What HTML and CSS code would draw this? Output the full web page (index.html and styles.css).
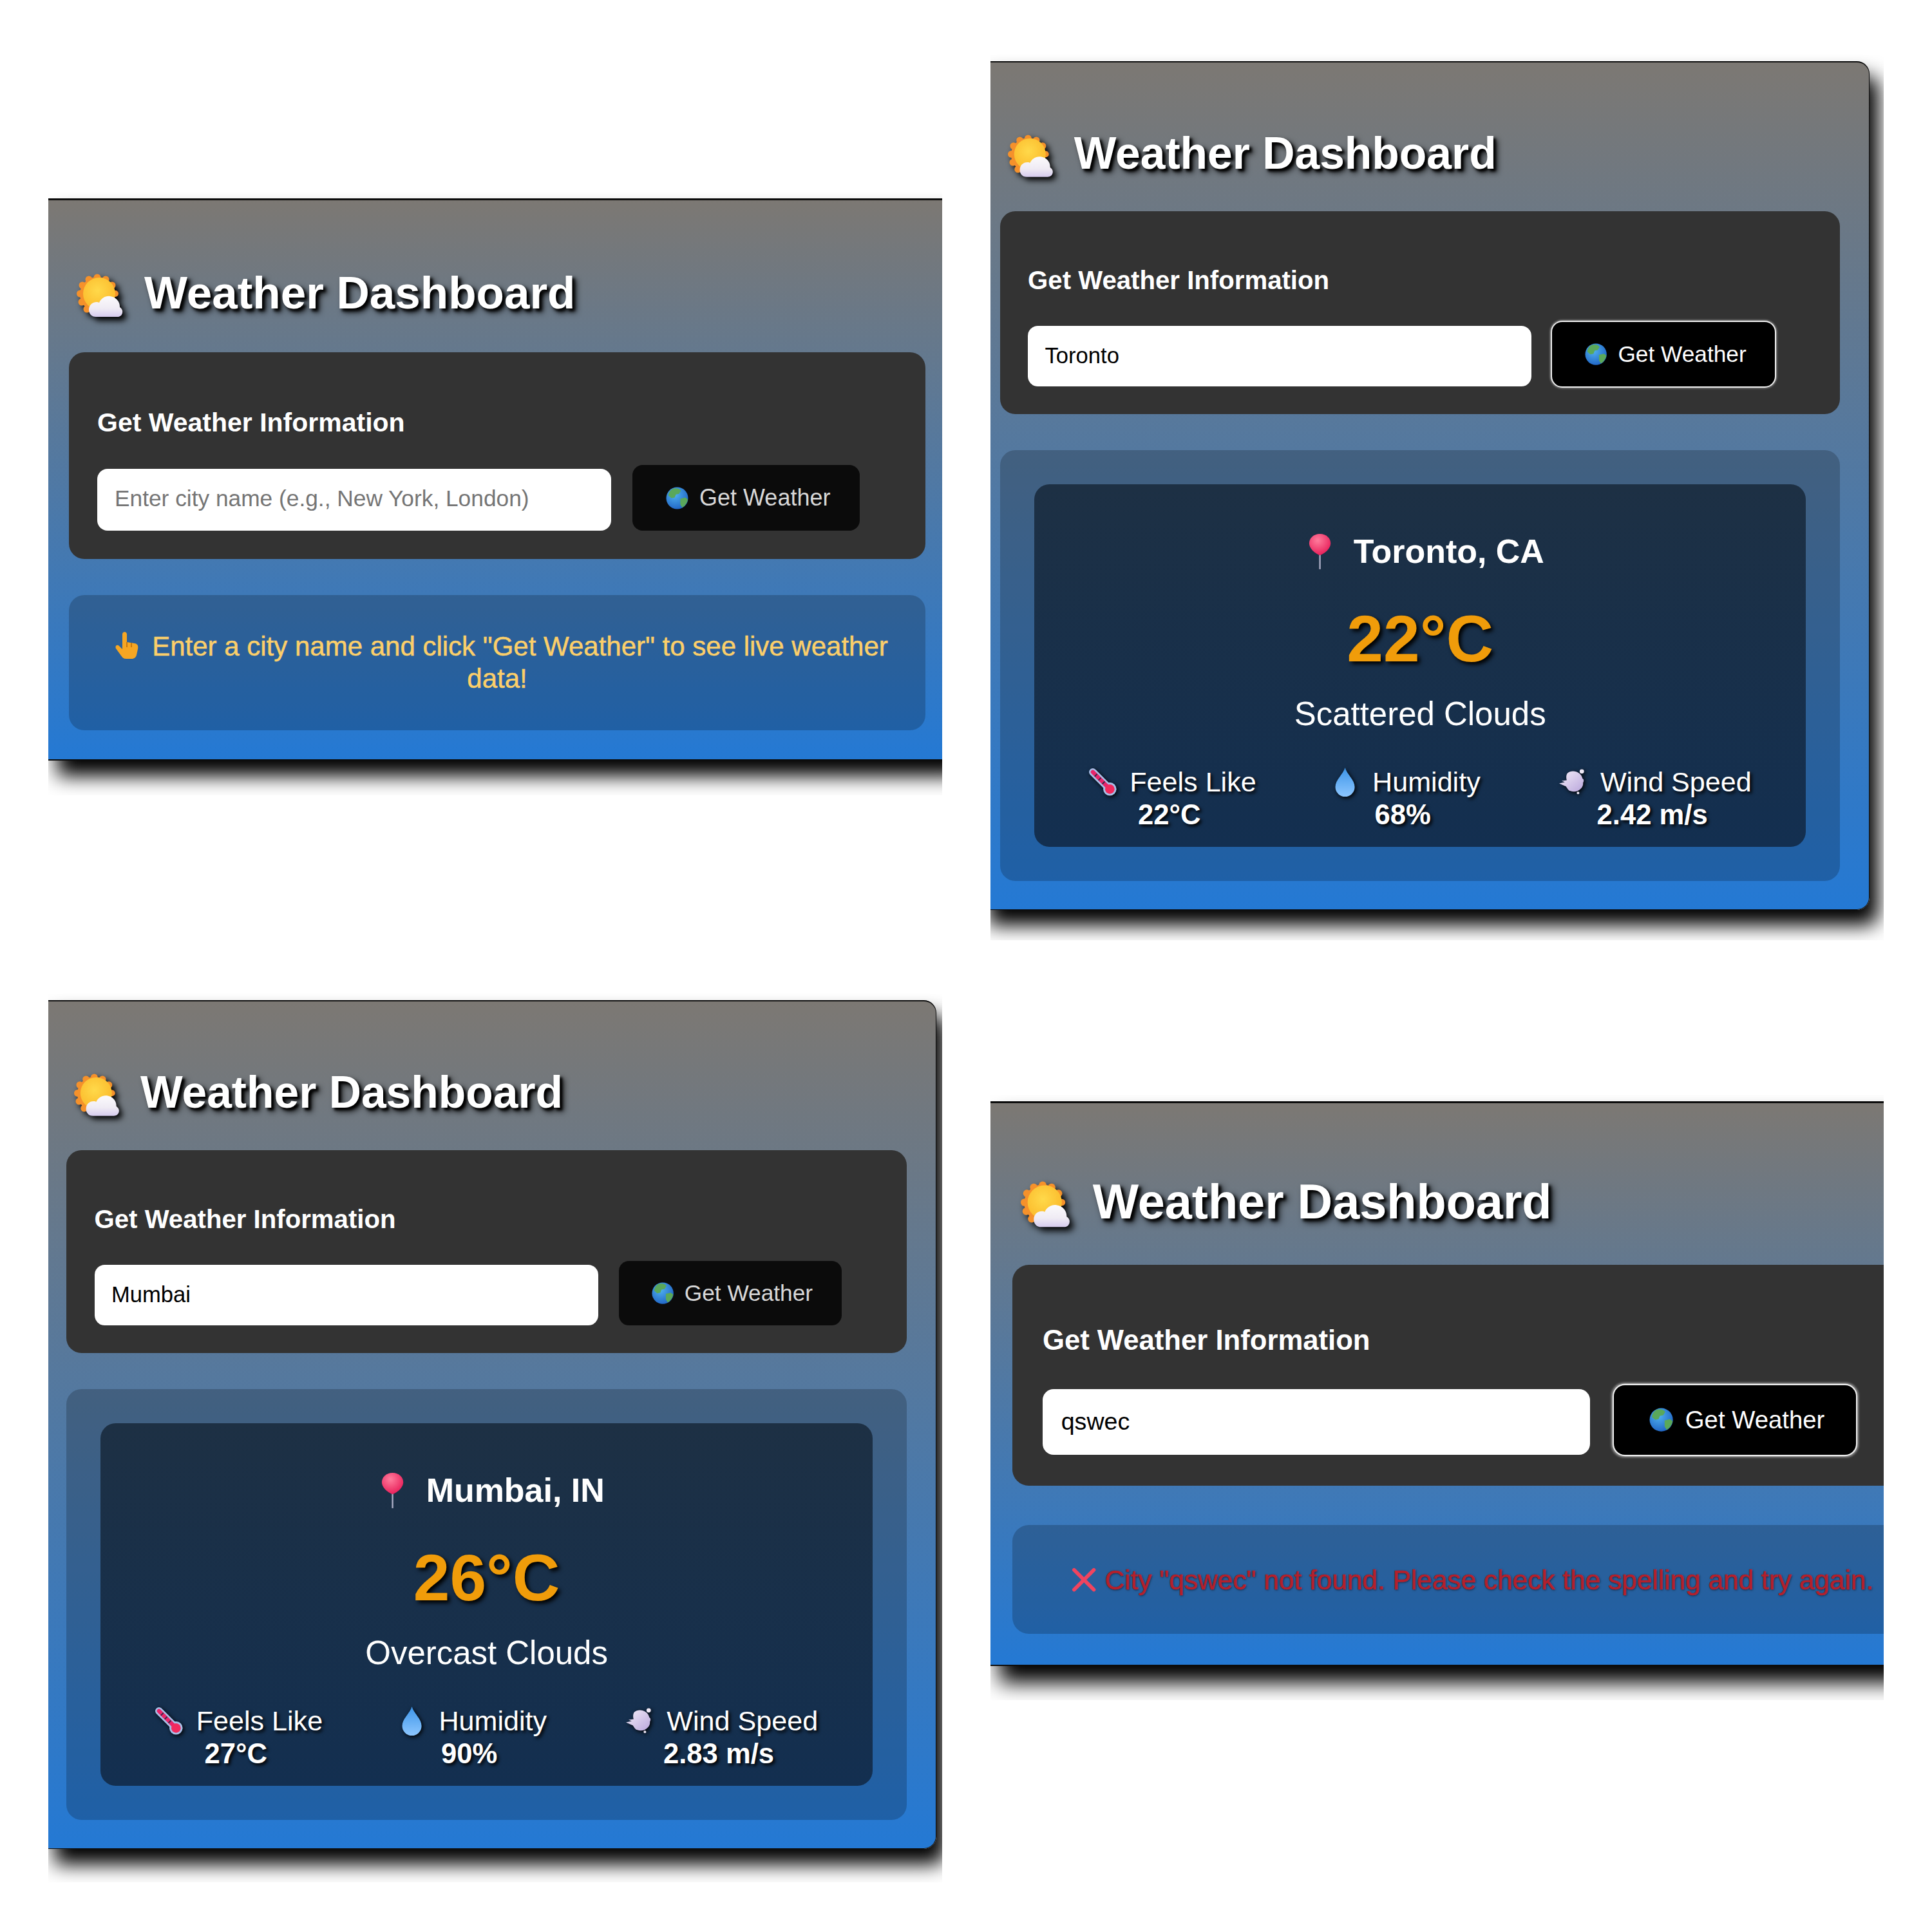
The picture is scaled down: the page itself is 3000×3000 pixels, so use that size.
FILE: index.html
```
<!DOCTYPE html>
<html lang="en">
<head>
<meta charset="utf-8">
<title>Weather Dashboard</title>
<link rel="stylesheet" href="styles.css">
</head>
<body>
<svg class="defs" width="0" height="0" aria-hidden="true">
  <defs>
    <radialGradient id="gSun" cx="45%" cy="40%" r="60%"><stop offset="0" stop-color="#ffd94a"/><stop offset="1" stop-color="#fbbb2c"/></radialGradient>
    <linearGradient id="gCloud" x1="0" y1="0" x2="0" y2="1"><stop offset="0" stop-color="#fbfafc"/><stop offset="0.6" stop-color="#efebf4"/><stop offset="1" stop-color="#d6cbee"/></linearGradient>
    <radialGradient id="gGlobe" cx="40%" cy="35%" r="70%"><stop offset="0" stop-color="#4fb0ee"/><stop offset="1" stop-color="#1f63c4"/></radialGradient>
    <radialGradient id="gPin" cx="40%" cy="30%" r="70%"><stop offset="0" stop-color="#ff7c9c"/><stop offset="1" stop-color="#e81f5a"/></radialGradient>
    <linearGradient id="gDrop" x1="0" y1="0" x2="0" y2="1"><stop offset="0" stop-color="#3d95e8"/><stop offset="1" stop-color="#8cc6ff"/></linearGradient>
    <linearGradient id="gWind" x1="0" y1="0" x2="1" y2="1"><stop offset="0" stop-color="#f4eef8"/><stop offset="1" stop-color="#b9a6dc"/></linearGradient>
    <symbol id="i-sun" viewBox="0 0 74 74">
      <g fill="#f5912b">
        <circle cx="32" cy="32" r="27"/><circle cx="32" cy="6" r="5.5"/><circle cx="45" cy="9" r="5.5"/><circle cx="55" cy="18" r="5.5"/><circle cx="60" cy="31" r="5"/><circle cx="19" cy="9" r="5.5"/><circle cx="9" cy="18" r="5.5"/><circle cx="5.500" cy="31" r="5.5"/><circle cx="8" cy="44" r="5.5"/><circle cx="16" cy="55" r="5.500"/><circle cx="26" cy="60" r="5"/>
      </g>
      <circle cx="35" cy="31" r="25" fill="url(#gSun)"/>
      <path d="M30 67c-7 0-11-5-11-11 0-7 5-12 12-12 1 0 3 0 4 1 3-7 10-11 17-10 9 1 15 8 15 16v1c3 2 5 5 4 9-1 4-4 6-8 6z" fill="url(#gCloud)"/>
    </symbol>
    <symbol id="i-globe" viewBox="0 0 36 36">
      <circle cx="18" cy="18" r="17.5" fill="url(#gGlobe)"/>
      <path d="M11 3c6-2 11 0 13 3l-3 5-5 1-2 5-5 1-5-4c0-4 3-9 7-11zM23 19l8-2 4 3c-1 6-5 11-9 13l-3-5z" fill="#5aa85a"/>
    </symbol>
    <symbol id="i-hand" viewBox="0 0 40 44">
      <path d="M13 5c0-5 7-5 7 0v12l12 2c5 1 6 4 5 9l-2 9c-1 4-4 6-8 6H19c-4 0-6-2-8-5L3 27c-2-4 2-7 5-4l5 5z" fill="#f6a623"/>
      <path d="M20 17v8M27 18v7" stroke="#c9780c" stroke-width="2" fill="none"/>
    </symbol>
    <symbol id="i-pin" viewBox="0 0 44 56">
      <path d="M22 28v28" stroke="#a9acc4" stroke-width="2.5"/>
      <path d="M22 0c10 0 17 7 17 15s-9 16-17 19C14 31 5 23 5 15S12 0 22 0z" fill="url(#gPin)"/>
    </symbol>
    <symbol id="i-thermo" viewBox="0 0 44 44">
      <path d="M6 6 30 30" stroke="#a8bfe8" stroke-width="12" stroke-linecap="round"/>
      <circle cx="33" cy="33" r="10.500" fill="#a8bfe8"/>
      <path d="M6 6 30 30" stroke="#e8246a" stroke-width="6.500" stroke-linecap="round"/>
      <circle cx="33" cy="33" r="7.500" fill="#f22a5e"/>
      <path d="M9 13l4-4M15 19l4-4M21 25l4-4" stroke="#3a2a4a" stroke-width="2"/>
    </symbol>
    <symbol id="i-drop" viewBox="0 0 36 50">
      <path d="M18 1c3 11 16 20 16 32a16 16 0 0 1-32 0C2 21 15 12 18 1z" fill="url(#gDrop)"/>
    </symbol>
    <symbol id="i-wind" viewBox="0 0 44 44">
      <path d="M13 8c8-7 22-2 24 8 3 2 2 5 1 7 1 9-10 17-20 13-3 0-5-4-7-7l-11-5 9-2-5-2 8-1c-1-4-1-8 1-11z" fill="url(#gWind)"/>
      <circle cx="36" cy="5" r="3.500" fill="#efe8f5"/><circle cx="30" cy="39" r="2" fill="#efe8f5"/>
    </symbol>
    <symbol id="i-x" viewBox="0 0 40 40">
      <path d="M4 4 36 36M36 4 4 36" stroke="#f0445f" stroke-width="6" stroke-linecap="round"/>
    </symbol>
  </defs>
</svg>

<main class="sheet">
  <section class="shot shot-a">
    <div class="panel">
      <h1 class="title"><svg class="ic ic-title"><use href="#i-sun"/></svg>Weather Dashboard</h1>
      <div class="search">
        <h3 class="search-head">Get Weather Information</h3>
        <div class="search-row">
          <div class="field placeholder">Enter city name (e.g., New York, London)</div>
          <div class="go"><svg class="ic ic-globe"><use href="#i-globe"/></svg>Get Weather</div>
        </div>
      </div>
      <div class="note note-hint"><svg class="ic ic-hand"><use href="#i-hand"/></svg>Enter a city name and click "Get Weather" to see live weather data!</div>
    </div>
  </section>

  <section class="shot shot-b">
    <div class="panel">
      <h1 class="title"><svg class="ic ic-title"><use href="#i-sun"/></svg>Weather Dashboard</h1>
      <div class="search">
        <h3 class="search-head">Get Weather Information</h3>
        <div class="search-row">
          <div class="field">Toronto</div>
          <div class="go go-focus"><svg class="ic ic-globe"><use href="#i-globe"/></svg>Get Weather</div>
        </div>
      </div>
      <div class="result">
        <div class="report">
          <div class="city"><svg class="ic ic-pin"><use href="#i-pin"/></svg>Toronto, CA</div>
          <div class="temp">22°C</div>
          <div class="desc">Scattered Clouds</div>
          <div class="stats">
            <div class="stat"><div class="stat-label"><svg class="ic ic-stat"><use href="#i-thermo"/></svg>Feels Like</div><div class="stat-value">22°C</div></div>
            <div class="stat"><div class="stat-label"><svg class="ic ic-stat"><use href="#i-drop"/></svg>Humidity</div><div class="stat-value">68%</div></div>
            <div class="stat"><div class="stat-label"><svg class="ic ic-stat"><use href="#i-wind"/></svg>Wind Speed</div><div class="stat-value">2.42 m/s</div></div>
          </div>
        </div>
      </div>
    </div>
  </section>

  <section class="shot shot-c">
    <div class="panel">
      <h1 class="title"><svg class="ic ic-title"><use href="#i-sun"/></svg>Weather Dashboard</h1>
      <div class="search">
        <h3 class="search-head">Get Weather Information</h3>
        <div class="search-row">
          <div class="field">Mumbai</div>
          <div class="go"><svg class="ic ic-globe"><use href="#i-globe"/></svg>Get Weather</div>
        </div>
      </div>
      <div class="result">
        <div class="report">
          <div class="city"><svg class="ic ic-pin"><use href="#i-pin"/></svg>Mumbai, IN</div>
          <div class="temp">26°C</div>
          <div class="desc">Overcast Clouds</div>
          <div class="stats">
            <div class="stat"><div class="stat-label"><svg class="ic ic-stat"><use href="#i-thermo"/></svg>Feels Like</div><div class="stat-value">27°C</div></div>
            <div class="stat"><div class="stat-label"><svg class="ic ic-stat"><use href="#i-drop"/></svg>Humidity</div><div class="stat-value">90%</div></div>
            <div class="stat"><div class="stat-label"><svg class="ic ic-stat"><use href="#i-wind"/></svg>Wind Speed</div><div class="stat-value">2.83 m/s</div></div>
          </div>
        </div>
      </div>
    </div>
  </section>

  <section class="shot shot-d">
    <div class="panel">
      <h1 class="title"><svg class="ic ic-title"><use href="#i-sun"/></svg>Weather Dashboard</h1>
      <div class="search">
        <h3 class="search-head">Get Weather Information</h3>
        <div class="search-row">
          <div class="field">qswec</div>
          <div class="go go-focus"><svg class="ic ic-globe"><use href="#i-globe"/></svg>Get Weather</div>
        </div>
      </div>
      <div class="note note-error"><svg class="ic ic-x"><use href="#i-x"/></svg>City "qswec" not found. Please check the spelling and try again.</div>
    </div>
  </section>
</main>
</body>
</html>
```
FILE: styles.css
```
* { box-sizing: border-box; }
html, body { margin: 0; background: #fff; }
.defs { position: absolute; }

.sheet {
  display: grid;
  grid-template-columns: 1388px 1387px;
  grid-template-rows: 1375px 1380px;
  column-gap: 75px;
  row-gap: 83px;
  padding: 85px 0 0 75px;
  font-family: "Liberation Sans", Arial, sans-serif;
}

.shot { overflow: hidden; padding-top: 10px; background: #fff; }
.shot-a { height: 937px; margin-top: 213px; }
.shot-b { height: 1375px; }
.shot-c { height: 1380px; }
.shot-d { height: 940px; margin-top: 157px; }

.panel {
  width: 1410px;
  padding: 0 46px 45px 32px;
  border: 2px solid #0c0c0c;
  border-top-width: 3px;
  border-left: 0;
  border-radius: 0 20px 20px 0;
  background: linear-gradient(180deg, #7c7873 0%, #2479d4 100%);
  box-shadow: 14px 24px 30px #000;
}
.shot-b .panel { zoom: 0.98; margin-left: -16.7px; }
.shot-c .panel { zoom: 0.98; margin-left: -3px; }
.shot-d .panel { zoom: 1.065; }

.ic { display: block; flex: none; }

.title {
  display: flex;
  align-items: center;
  margin: 0 0 52px;
  padding: 104px 0 0 12px;
  font-size: 71px;
  line-height: 80px;
  font-weight: 700;
  color: #fff;
  text-shadow: 4px 4px 4px #000, 6px 6px 10px rgba(0, 0, 0, 0.8);
}
.ic-title {
  width: 74px;
  height: 74px;
  margin: 7px 31px -7px 0;
  filter: drop-shadow(6px 6px 5px #000);
}

.search {
  padding: 86px 44px 44px;
  border-radius: 24px;
  background: #333;
}
.shot-d .search { padding-bottom: 45px; }
.search-head {
  margin: 0 0 42px;
  font-size: 41px;
  line-height: 47px;
  font-weight: 700;
  color: #fff;
}
.search-row { display: flex; align-items: flex-end; gap: 33px; }
.shot-d .search-row { gap: 35px; }
.field {
  width: 798px;
  height: 96px;
  padding: 0 27px;
  border-radius: 16px;
  background: #fff;
  color: #000;
  font-size: 35.3px;
  line-height: 94px;
}
.placeholder { color: #757575; line-height: 92px; }
.go {
  display: flex;
  align-items: center;
  gap: 17px;
  width: 353px;
  height: 102px;
  padding-left: 52px;
  border-radius: 16px;
  background: #0b0b0b;
  color: #d8d8d8;
  font-size: 36px;
}
.go-focus {
  background: #000;
  color: #fff;
  box-shadow: 0 0 0 2px #eee, 0 0 3px 3px rgba(255, 255, 255, 0.45);
}
.ic-globe { width: 35px; height: 35px; }

.note {
  margin-top: 56px;
  padding: 55px 44px;
  border-radius: 24px;
  background: rgba(0, 0, 0, 0.2);
  line-height: 50px;
  text-align: center;
  -webkit-text-stroke: 0.5px currentColor;
}
.note-hint { color: #fbcf6a; font-size: 42px; }
.note-error {
  display: flex;
  justify-content: center;
  align-items: center;
  margin-top: 57px;
  padding: 55px 42px 54px 54px;
  color: #b3202c;
  font-size: 39.8px;
  white-space: nowrap;
  text-shadow: 1px 1px 3px rgba(0, 0, 0, 0.6);
}
.ic-hand { display: inline-block; width: 40px; height: 44px; margin: 0 19px 0 12px; vertical-align: -6px; }
.ic-x { width: 36px; height: 36px; margin-right: 12px; }

.result {
  margin-top: 57px;
  padding: 54px;
  border-radius: 24px;
  background: rgba(0, 0, 0, 0.2);
}
.report {
  padding: 77px 0 26px;
  border-radius: 24px;
  background: linear-gradient(180deg, #1d3044 0%, #132f50 100%);
  color: #fff;
  text-align: center;
}
.city {
  display: flex;
  justify-content: center;
  align-items: center;
  height: 60px;
  padding-left: 16px;
  font-size: 53px;
  font-weight: 700;
}
.ic-pin { width: 44px; height: 56px; margin-right: 31px; }
.temp {
  margin-top: 49px;
  font-size: 104px;
  line-height: 120px;
  font-weight: 700;
  color: #f09c0a;
  text-shadow: 4px 4px 6px #000;
}
.desc { margin-top: 30px; font-size: 52px; line-height: 58px; }
.stats { display: flex; justify-content: center; gap: 125px; margin-top: 53px; }
.stat { text-shadow: 3px 3px 5px #000; }
.stat:first-child { margin-right: -6px; }
.stat-label {
  display: flex;
  align-items: center;
  font-size: 44px;
  line-height: 50px;
}
.ic-stat { width: 44px; height: 48px; margin-right: 21px; filter: drop-shadow(3px 3px 3px #000); }
.stat-value { margin-top: 2px; padding-right: 10px; font-size: 44.5px; line-height: 50px; font-weight: 700; }
```
